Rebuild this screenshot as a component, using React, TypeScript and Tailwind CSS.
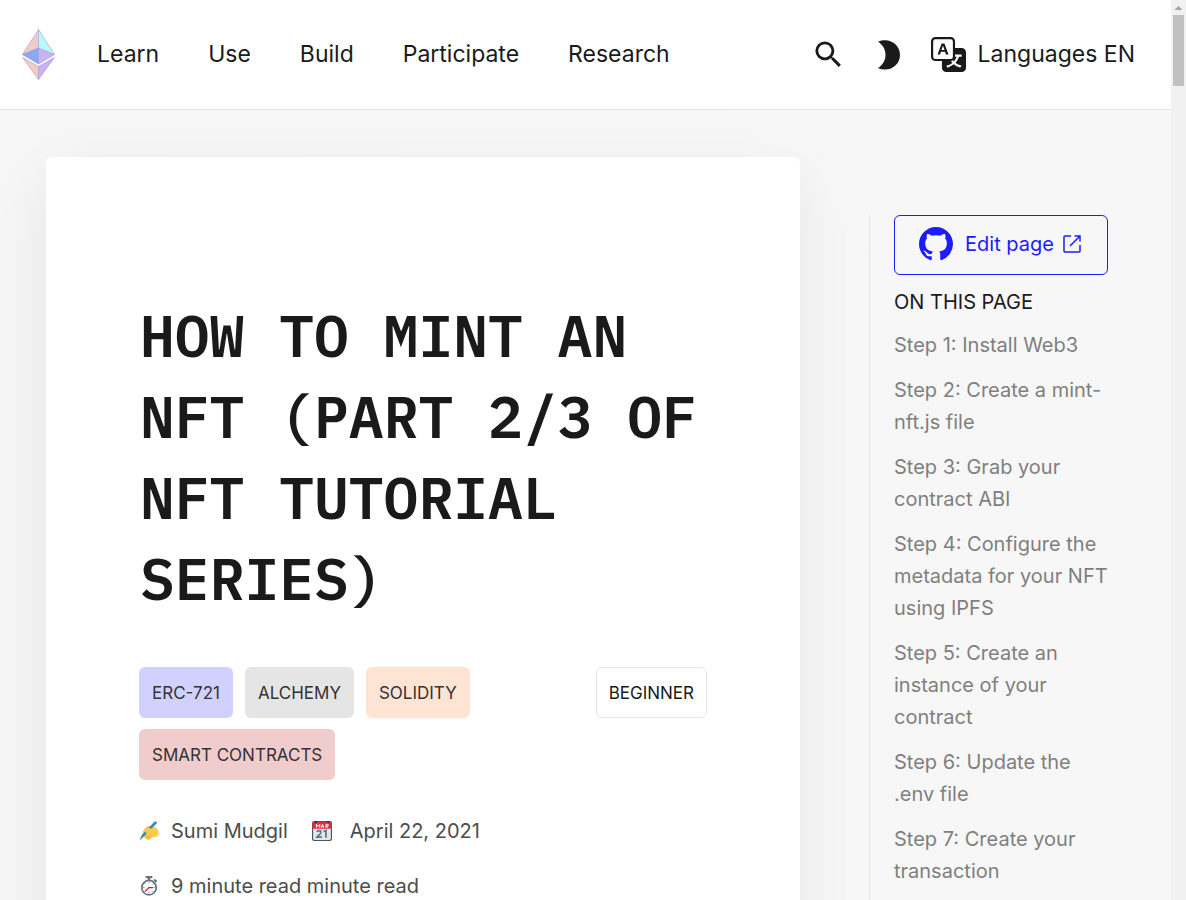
import { BsTranslate, BsGithub } from "react-icons/bs";
import { MdSearch } from "react-icons/md";

const navItems = ["Learn", "Use", "Build", "Participate", "Research"];

const tags = [
  { label: "ERC-721", tone: "bg-[#d1d1ff]" },
  { label: "Alchemy", tone: "bg-[#e5e5e5]" },
  { label: "Solidity", tone: "bg-[#ffe3d3]" },
  { label: "Smart contracts", tone: "bg-[#f0cccc]" },
];

const steps = [
  "Step 1: Install Web3",
  "Step 2: Create a mint-nft.js file",
  "Step 3: Grab your contract ABI",
  "Step 4: Configure the metadata for your NFT using IPFS",
  "Step 5: Create an instance of your contract",
  "Step 6: Update the .env file",
  "Step 7: Create your transaction",
];

function EthLogo() {
  return (
    <svg viewBox="0 0 33 52" className="h-[52px] w-[33px]" aria-hidden="true">
      <path d="M16.5 0.5V19L0.5 25.5z" fill="#f0cdc2" />
      <path d="M16.5 0.5V19L32.5 25.5z" fill="#b8fbf6" />
      <path d="M0.5 25.5L16.5 19V35z" fill="#88aaf1" />
      <path d="M32.5 25.5L16.5 19V35z" fill="#c9b3f5" />
      <path d="M0.5 28.5L16.5 37.5V50.5z" fill="#f0cdc2" />
      <path d="M32.5 28.5L16.5 37.5V50.5z" fill="#c9b3f5" />
      <path
        d="M16.5 0.5L0.5 25.5L16.5 35L32.5 25.5zM16.5 0.5V35M0.5 25.5L16.5 19L32.5 25.5M0.5 28.5L16.5 37.5L32.5 28.5L16.5 50.5zM16.5 37.5V50.5"
        fill="none"
        stroke="#8a80d8"
        strokeOpacity="0.55"
        strokeWidth="0.9"
      />
    </svg>
  );
}

function Moon() {
  return (
    <svg viewBox="0 0 22 30" className="h-[30px] w-[22px]" aria-hidden="true">
      <path
        d="M0 1.8C2.3.7 4.8.3 7.2.3 15.4.3 22 6.8 22 15S15.4 29.5 7.2 29.5C4.8 29.5 2.3 29.1 0 28C4.6 25.3 7.5 20.4 7.5 15S4.6 4.5 0 1.8z"
        fill="#1a1a1a"
      />
    </svg>
  );
}

function ExternalLink() {
  return (
    <svg viewBox="0 0 18 18" className="size-[18px]" fill="none" stroke="currentColor" strokeWidth="1.5" aria-hidden="true">
      <path d="M8 1H2a1 1 0 0 0-1 1v14a1 1 0 0 0 1 1h14a1 1 0 0 0 1-1v-6" />
      <path d="M11.5 1H17v5.5M17 1L7 11" />
    </svg>
  );
}

function WritingHand() {
  return (
    <svg viewBox="0 0 36 36" className="size-5" aria-hidden="true">
      <path
        d="M8 17c3-6 8-9 13-8l4 2c5 0 9 3 10 8 1 5-1 9-5 10h-7c-2 4-7 5-10 3-3 0-4-2-3-4-4-1-5-7-2-11z"
        fill="#ffcb4c"
      />
      <path d="M12 28c3 1 6 0 8-2m-5 7c3 0 5-1 7-3" fill="none" stroke="#ee9b37" strokeWidth="1.5" />
      <path d="M29 0l4 3L9 28l-8 7 4-10z" fill="#3b88c3" />
      <path d="M11 19c3-8 12-8 12-3-1 3-5 4-8 8z" fill="#ffcb4c" />
    </svg>
  );
}

function Calendar() {
  return (
    <svg viewBox="0 0 36 36" className="size-5" aria-hidden="true">
      <rect width="36" height="36" rx="4" fill="#50545a" />
      <path d="M2 10h32v21a3 3 0 0 1-3 3H5a3 3 0 0 1-3-3z" fill="#e1e8ed" />
      <path d="M1 14V6a4 4 0 0 1 4-4h26a4 4 0 0 1 4 4v8z" fill="#dd2e44" />
      <circle cx="7" cy="2" r="2" fill="#292f33" />
      <circle cx="29" cy="2" r="2" fill="#292f33" />
      <path
        d="M8 12V6l3 4 3-4v6M17 12l2-6 2 6M18 10h3M25 12V6h4v3h-4l4 3"
        fill="none"
        stroke="#fff"
        strokeWidth="1.6"
      />
      <path d="M9 20c1-4 8-3 7 1-1 3-5 5-7 8h9M21 19l4-2v13" fill="none" stroke="#66757f" strokeWidth="3.2" />
    </svg>
  );
}

function Stopwatch() {
  return (
    <svg viewBox="0 0 36 36" className="size-5" aria-hidden="true">
      <path d="M12 0h12v4h-4v4h-4V4h-4zM28 5l5 4-3 3-4-4z" fill="#66757f" />
      <circle cx="18" cy="21" r="13" fill="#fff" stroke="#66757f" strokeWidth="3" />
      <path
        d="M18 10v3M18 29v3M7 21h3M26 21h3M10 13l2 2M26 13l-2 2M10 29l2-2M26 29l-2-2"
        stroke="#66757f"
        strokeWidth="1.5"
      />
      <path d="M18 21h7" stroke="#292f33" strokeWidth="2" />
      <path d="M19 20l-8 8" stroke="#dd2e44" strokeWidth="2.5" />
    </svg>
  );
}

export default function App() {
  return (
    <div className="flex h-screen overflow-hidden bg-[#f7f7f7] font-['Inter',sans-serif] text-[#1a1a1a]">
      <div className="min-w-0 flex-1">
        <header className="flex h-[110px] items-center justify-between border-b border-[#e5e5e5] bg-white pr-9 pl-[22px]">
          <div className="flex items-center">
            <a href="#home" aria-label="Home">
              <EthLogo />
            </a>
            <nav className="ml-[42px] flex gap-[49px] pb-0.5 text-[23px] leading-9">
              {navItems.map((item) => (
                <a key={item} href={`#${item.toLowerCase()}`}>
                  {item}
                </a>
              ))}
            </nav>
          </div>
          <div className="flex items-center text-[23px] leading-9">
            <button type="button" aria-label="Search">
              <MdSearch size={35} />
            </button>
            <button type="button" aria-label="Toggle theme" className="ml-8">
              <Moon />
            </button>
            <a href="#languages" className="ml-[31px] flex items-center gap-3">
              <BsTranslate size={35} />
              <span className="pb-0.5">Languages EN</span>
            </a>
          </div>
        </header>
        <div className="flex items-start bg-linear-to-r from-[#f6f6f6] to-[#f7f7f7] pl-[46px]">
          <main className="mt-[47px] min-h-screen min-w-0 flex-1 rounded-md bg-white px-[93px] pt-[138px] shadow-[0_20px_60px_rgba(0,0,0,0.07)]">
            <h1 className="pl-px font-['IBM_Plex_Mono',monospace] text-[58px] leading-[81px] font-semibold uppercase">
              How to Mint an NFT (Part 2/3 of NFT Tutorial Series)
            </h1>
            <div className="mt-12 flex items-start justify-between text-[17px] leading-[27px] text-[#333333] uppercase">
              <div className="flex flex-1 flex-wrap gap-x-3 gap-y-[11px]">
                {tags.map((tag) => (
                  <span key={tag.label} className={`rounded-md px-[13px] pt-[13px] pb-[11px] ${tag.tone}`}>
                    {tag.label}
                  </span>
                ))}
              </div>
              <span className="rounded-md border border-[#e5e5e5] px-3 pt-3 pb-2.5 text-[#1a1a1a]">Beginner</span>
            </div>
            <div className="mt-[35px] flex flex-wrap gap-x-6 gap-y-[23px] text-xl leading-8 text-[#4c4c4c]">
              <span className="flex items-center gap-3">
                <WritingHand />
                Sumi Mudgil
              </span>
              <span className="flex items-center gap-[18px]">
                <Calendar />
                April 22, 2021
              </span>
              <span className="flex basis-full items-center gap-3">
                <Stopwatch />9 minute read minute read
              </span>
            </div>
          </main>
          <aside className="mt-[105px] mr-12 ml-[69px] min-h-screen w-[254px] shrink-0 border-l border-[#e5e5e5] pl-6">
            <a
              href="#edit"
              className="mr-[15px] flex h-[60px] items-center justify-center rounded-md border border-[#1c1cff] pr-0.5 pb-0.5 text-xl text-[#1c1cff]"
            >
              <BsGithub size={34} />
              <span className="mr-[9px] ml-3">Edit page</span>
              <ExternalLink />
            </a>
            <p className="mt-[11px] text-xl leading-8 uppercase">On this page</p>
            <ul className="mt-[11px] mr-2 flex flex-col gap-[13px] text-xl leading-8 text-[#7f7f7f]">
              {steps.map((step) => (
                <li key={step}>
                  <a href="#step">{step}</a>
                </li>
              ))}
            </ul>
          </aside>
        </div>
      </div>
      <div className="flex w-[15px] shrink-0 flex-col items-center bg-[#f1f1f1]" aria-hidden="true">
        <svg viewBox="0 0 15 15" className="size-[15px]">
          <path d="M3.5 10h8l-4-4z" fill="#a3a3a3" />
        </svg>
        <div className="h-[71px] w-[11px] bg-[#c1c1c1]" />
      </div>
    </div>
  );
}
